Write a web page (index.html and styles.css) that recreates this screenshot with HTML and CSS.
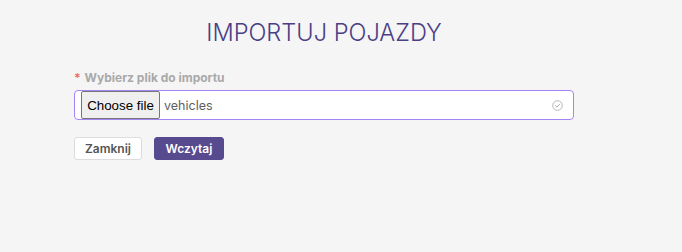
FILE: index.html
```html
<!DOCTYPE html>
<html lang="pl">
<head>
<meta charset="utf-8">
<title>Importuj pojazdy</title>
<link rel="stylesheet" href="styles.css">
</head>
<body>
<div class="modal">
  <h1 class="title">IMPORTUJ POJAZDY</h1>
  <div class="field">
    <label class="label"><span class="req">*</span> Wybierz plik do importu</label>
    <div class="file-input">
      <span class="file-btn">Choose file</span>
      <span class="file-name">vehicles</span>
      <svg class="check" width="11" height="11" viewBox="0 0 11 11" aria-hidden="true">
        <circle cx="5.5" cy="5.5" r="4.8" fill="none" stroke="#b0b0b0" stroke-width="0.9"/>
        <path d="M3.4 5.7 L4.9 7.1 L7.6 4.2" fill="none" stroke="#a0a0a0" stroke-width="0.9" stroke-linecap="round" stroke-linejoin="round"/>
      </svg>
    </div>
  </div>
  <div class="actions">
    <button class="btn btn-light">Zamknij</button>
    <button class="btn btn-primary">Wczytaj</button>
  </div>
</div>
</body>
</html>
```
FILE: styles.css
```css
html, body {
  margin: 0;
  padding: 0;
  background: #f5f5f5;
  font-family: Inter, "Noto Sans", sans-serif;
}
.modal {
  width: 500px;
  margin-left: 74px;
  padding-top: 18px;
}
.title {
  margin: 0;
  text-align: center;
  font-size: 23.6px;
  line-height: 30px;
  font-weight: 300;
  color: #4a3f86;
}
.field {
  margin-top: 22px;
  display: flex;
  flex-direction: column;
  gap: 4px;
}
.label {
  font-size: 12px;
  line-height: 16px;
  font-weight: 700;
  color: #a9a9a9;
}
.req {
  color: #f56c6c;
  margin-right: 1px;
}
.file-input {
  height: 30px;
  box-sizing: border-box;
  border: 1px solid #a386f3;
  border-radius: 4px;
  background: #fff;
  display: flex;
  align-items: center;
  padding: 0 10px 0 6px;
}
.file-btn {
  height: 28px;
  box-sizing: border-box;
  border: 1px solid #767676;
  border-radius: 2px;
  background: #efefef;
  font-family: "Liberation Sans", Arial, sans-serif;
  font-size: 13.33px;
  color: #000;
  display: flex;
  align-items: center;
  justify-content: center;
  white-space: nowrap;
  flex: none;
  width: 79px;
}
.file-name {
  flex: 1;
  margin-left: 4px;
  font-size: 12.5px;
  color: #5f5f5f;
}
.check {
  display: block;
}
.actions {
  margin-top: 17px;
  display: flex;
  gap: 12px;
}
.btn {
  height: 23px;
  box-sizing: border-box;
  font-family: Inter, "Noto Sans", sans-serif;
  font-size: 12px;
  font-weight: 600;
  border-radius: 3px;
  padding: 0;
  cursor: pointer;
}
.btn-light {
  width: 68px;
  background: #fff;
  border: 1px solid #dcdcdc;
  color: #555;
}
.btn-primary {
  width: 70px;
  background: #574a8f;
  border: 1px solid #574a8f;
  color: #fff;
}
```
